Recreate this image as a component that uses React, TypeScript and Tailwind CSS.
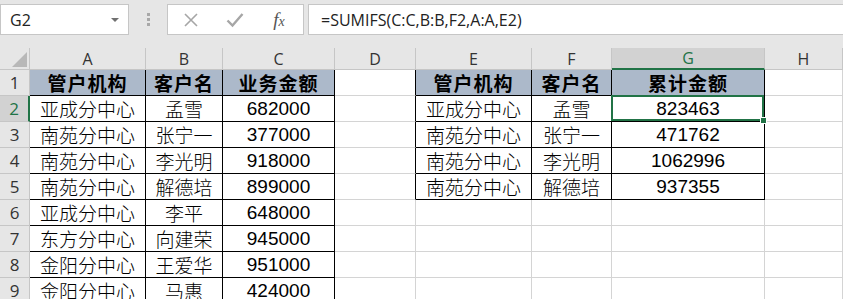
import React from "react";

const COLS = ["A", "B", "C", "D", "E", "F", "G", "H"];

const table1 = [
  ["管户机构", "客户名", "业务金额"],
  ["亚成分中心", "孟雪", "682000"],
  ["南苑分中心", "张宁一", "377000"],
  ["南苑分中心", "李光明", "918000"],
  ["南苑分中心", "解德培", "899000"],
  ["亚成分中心", "李平", "648000"],
  ["东方分中心", "向建荣", "945000"],
  ["金阳分中心", "王爱华", "951000"],
  ["金阳分中心", "马惠", "424000"],
];

const table2 = [
  ["管户机构", "客户名", "累计金额"],
  ["亚成分中心", "孟雪", "823463"],
  ["南苑分中心", "张宁一", "471762"],
  ["南苑分中心", "李光明", "1062996"],
  ["南苑分中心", "解德培", "937355"],
];

const inTable = (r: number, c: number) =>
  (c >= 1 && c <= 3 && r >= 1) || (c >= 5 && c <= 7 && r >= 1 && r <= 5);

const cellValue = (r: number, c: number) => {
  if (c >= 1 && c <= 3) return table1[r - 1]?.[c - 1] ?? "";
  if (c >= 5 && c <= 7) return table2[r - 1]?.[c - 5] ?? "";
  return "";
};

const cjk = { fontFamily: '"Noto Sans CJK SC", sans-serif' };

const Cell = ({ r, c }: { r: number; c: number }) => {
  const value = cellValue(r, c);
  const rightBlack = inTable(r, c) || inTable(r, c + 1);
  const bottomBlack = inTable(r, c) || inTable(r + 1, c);
  const isHead = r === 1 && inTable(r, c);
  const isNum = /^\d+$/.test(value);
  const selected = r === 2 && c === 7;

  return (
    <div
      className={`relative h-[26px] flex items-center justify-center border-r border-b ${
        rightBlack ? "border-r-black" : "border-r-[#d4d4d4]"
      } ${bottomBlack ? "border-b-black" : "border-b-[#d4d4d4]"} ${
        isHead ? "bg-[#acb9ca]" : "bg-white"
      } ${selected ? "z-10" : ""}`}
    >
      {value && (
        <span
          className={`text-black whitespace-nowrap pt-[2px] ${
            isHead ? "font-bold text-[19px] tracking-[1px]" : "font-light text-[19px]"
          } ${isNum ? (c === 7 ? "font-normal text-[16px]" : "font-normal text-[18px]") : ""}`}
          style={isNum ? { fontFamily: '"Liberation Sans", Arial, sans-serif' } : cjk}
        >
          {value}
        </span>
      )}
      {selected && (
        <>
          <div className="absolute -left-[1px] -top-[1px] right-0 bottom-0 border-2 border-[#217346] pointer-events-none" />
          <div className="absolute -right-[3px] -bottom-[3px] w-[7px] h-[7px] bg-[#217346] border border-white" />
        </>
      )}
    </div>
  );
};

const FormulaBar = () => (
  <div className="h-[48px] bg-[#e6e6e6] flex items-start pt-[4px]">
    <div className="w-[129px] h-[31px] bg-white border border-[#c6c6c6] flex items-center justify-between pl-[9px] pr-[8px]">
      <span className="text-[16px] text-[#222]" style={{ fontFamily: '"Open Sans", sans-serif' }}>
        G2
      </span>
      <svg width="10" height="6" viewBox="0 0 10 6">
        <path d="M1 1h8L5 5z" fill="#707070" />
      </svg>
    </div>
    <div className="w-[38px] h-[31px] flex flex-col items-center justify-center gap-[2px]">
      <span className="w-[3px] h-[3px] bg-[#a8a8a8]" />
      <span className="w-[3px] h-[3px] bg-[#a8a8a8]" />
      <span className="w-[3px] h-[3px] bg-[#a8a8a8]" />
    </div>
    <div className="w-[137px] h-[31px] bg-white border border-[#c6c6c6] flex items-center">
      <div className="w-[44px] flex justify-center ml-[1px]">
        <svg width="16" height="16" viewBox="0 0 16 16">
          <path d="M2 2L14 14M14 2L2 14" stroke="#a6a6a6" strokeWidth="1.6" />
        </svg>
      </div>
      <div className="w-[44px] flex justify-center">
        <svg width="18" height="16" viewBox="0 0 18 16">
          <path d="M1.5 8.5L6.5 13.5L16.5 2" stroke="#a6a6a6" strokeWidth="2.4" fill="none" />
        </svg>
      </div>
      <div className="w-[44px] flex justify-center">
        <span
          className="italic text-[19px] text-[#555] leading-none"
          style={{ fontFamily: '"Liberation Serif", serif' }}
        >
          f<span className="text-[14px]">x</span>
        </span>
      </div>
    </div>
    <div className="ml-[4px] flex-1 h-[31px] bg-white border border-r-0 border-[#c6c6c6] flex items-center pl-[12px]">
      <span className="text-[16px] text-[#222]" style={{ fontFamily: '"Open Sans", sans-serif' }}>
        =SUMIFS(C:C,B:B,F2,A:A,E2)
      </span>
    </div>
  </div>
);

export default function App() {
  const rows = [1, 2, 3, 4, 5, 6, 7, 8, 9];
  const hdrFont = { fontFamily: '"Open Sans", "Liberation Sans", sans-serif' };

  return (
    <div className="w-[843px] h-[299px] overflow-hidden bg-white">
      <FormulaBar />
      <div className="grid grid-cols-[30px_116px_77px_112px_81px_116px_80px_153px_1fr]">
        {/* corner */}
        <div className="h-[22px] bg-[#e6e6e6] border-r border-b border-[#c6c6c6] relative">
          <svg className="absolute right-[2px] bottom-[2px]" width="15" height="15" viewBox="0 0 15 15">
            <path d="M15 0V15H0z" fill="#b8b8b8" />
          </svg>
        </div>
        {COLS.map((col) =>
          col === "G" ? (
            <div
              key={col}
              className="h-[22px] bg-[#d2d2d2] border-r border-r-[#c6c6c6] border-b-2 border-b-[#217346] flex items-center justify-center text-[16px] text-[#217346]"
              style={hdrFont}
            >
              {col}
            </div>
          ) : (
            <div
              key={col}
              className="h-[22px] bg-[#e6e6e6] border-r border-b border-[#c6c6c6] flex items-center justify-center text-[16px] text-[#333]"
              style={hdrFont}
            >
              {col}
            </div>
          )
        )}
        {rows.map((r) => (
          <React.Fragment key={r}>
            {r === 2 ? (
              <div
                className="h-[26px] bg-[#d2d2d2] border-r-2 border-r-[#217346] border-b border-b-[#c6c6c6] flex items-center justify-center text-[17px] text-[#217346]"
                style={hdrFont}
              >
                {r}
              </div>
            ) : (
              <div
                className="h-[26px] bg-[#e6e6e6] border-r border-b border-[#c6c6c6] flex items-center justify-center text-[17px] text-[#333]"
                style={hdrFont}
              >
                {r}
              </div>
            )}
            {COLS.map((_, i) => (
              <Cell key={i} r={r} c={i + 1} />
            ))}
          </React.Fragment>
        ))}
      </div>
    </div>
  );
}
